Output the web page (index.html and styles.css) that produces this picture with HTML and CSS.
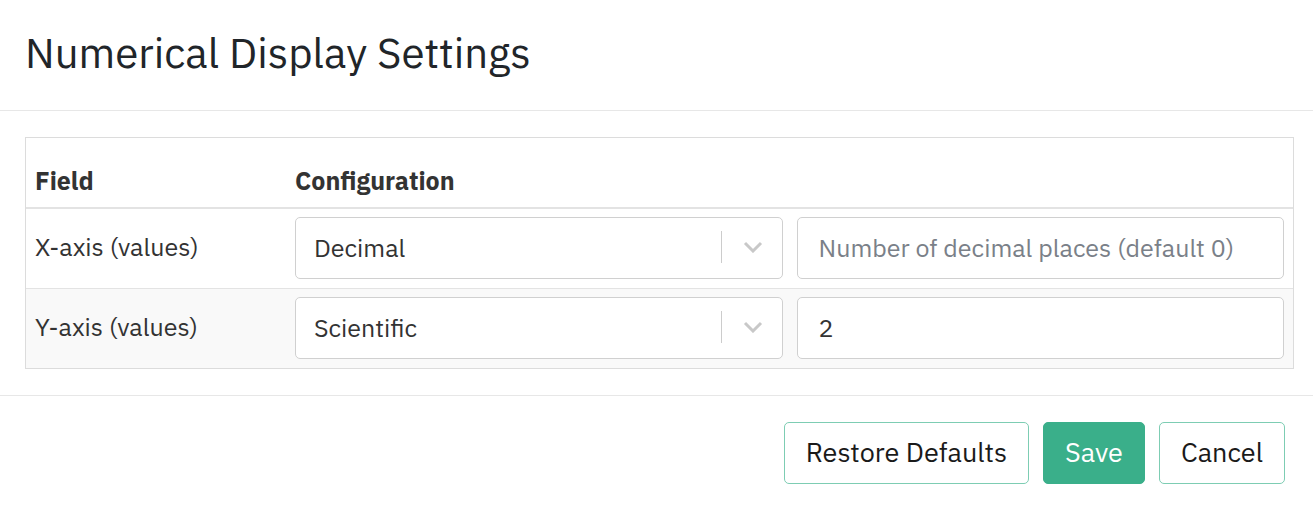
FILE: index.html
```html
<!DOCTYPE html>
<html>
<head>
    <title>Numerical Display Settings</title>
    <link rel="stylesheet" href="styles.css">
</head>
<body>
    <div class="modal">
        <div class="modal-header">
            <h1>Numerical Display Settings</h1>
        </div>
        <div class="modal-body">
            <div class="settings-table">
                <div class="row head">
                    <div class="cell field">Field</div>
                    <div class="cell config">Configuration</div>
                </div>
                <div class="row">
                    <div class="cell field">X-axis (values)</div>
                    <div class="cell config">
                        <div class="select">
                            <span class="select-value">Decimal</span>
                            <span class="select-sep"></span>
                            <svg class="chevron" width="20" height="12" viewBox="0 0 20 12"><path d="M2 2 L10 10 L18 2" fill="none" stroke="#c8c8c8" stroke-width="3"/></svg>
                        </div>
                        <input type="text" class="text-input" placeholder="Number of decimal places (default 0)">
                    </div>
                </div>
                <div class="row striped">
                    <div class="cell field">Y-axis (values)</div>
                    <div class="cell config">
                        <div class="select">
                            <span class="select-value">Scientific</span>
                            <span class="select-sep"></span>
                            <svg class="chevron" width="20" height="12" viewBox="0 0 20 12"><path d="M2 2 L10 10 L18 2" fill="none" stroke="#c8c8c8" stroke-width="3"/></svg>
                        </div>
                        <input type="text" class="text-input" value="2">
                    </div>
                </div>
            </div>
        </div>
        <div class="modal-footer">
            <button type="button" class="btn outline">Restore Defaults</button>
            <button type="button" class="btn primary">Save</button>
            <button type="button" class="btn outline">Cancel</button>
        </div>
    </div>
</body>
</html>
```

FILE: styles.css
```css
body {
    font-family: "IBM Plex Sans", Roboto, "Noto Sans", sans-serif;
    margin: 0;
    background-color: white;
    color: #333;
}
.modal {
    width: 1313px;
}
.modal-header {
    height: 111px;
    border-bottom: 1px solid #e7e7e7;
    padding: 0 25px;
    display: flex;
    align-items: center;
    box-sizing: border-box;
}
.modal-header h1 {
    margin: 0;
    font-size: 42px;
    font-weight: 400;
    color: #212529;
    position: relative;
    top: -3px;
}
.modal-body {
    padding: 26px 19px 26px 25px;
}
.settings-table {
    border: 1px solid #dcdcdc;
}
.row {
    display: flex;
    border-bottom: 1px solid #e3e3e3;
}
.row:last-child {
    border-bottom: none;
}
.row.head {
    border-bottom: 2px solid #e3e3e3;
    height: 69px;
    font-weight: 700;
    align-items: flex-end;
}
.row.head .cell {
    padding-bottom: 10px;
}
.row.striped {
    background-color: #f9f9f9;
}
.cell {
    font-size: 25px;
    padding: 8px 9px 9px;
    display: flex;
    align-items: center;
}
.cell.field {
    width: 242px;
    padding-bottom: 12px;
}
.cell.config {
    flex: 1;
    display: grid;
    grid-template-columns: 1fr 1fr;
    gap: 14px;
}
.select {
    height: 62px;
    border: 1px solid #d0d0d0;
    border-radius: 5px;
    background-color: white;
    display: flex;
    align-items: center;
    box-sizing: border-box;
    padding: 0 0 2px 18px;
    min-width: 0;
}
.select-value {
    flex: 1;
    color: #333;
}
.select-sep {
    width: 1px;
    height: 32px;
    background-color: #cccccc;
}
.chevron {
    margin: 0 19px 0 21px;
}
.text-input {
    width: 100%;
    height: 62px;
    border: 1px solid #d0d0d0;
    border-radius: 5px;
    box-sizing: border-box;
    padding: 0 21px 2px;
    font-family: inherit;
    font-size: 25px;
    color: #333;
    min-width: 0;
}
.text-input::placeholder {
    color: #7a8088;
}
.modal-footer {
    border-top: 1px solid #e7e7e7;
    padding: 26px 28px 21px;
    display: flex;
    justify-content: flex-end;
    gap: 14px;
}
.btn {
    height: 62px;
    padding: 0 21px 3px;
    font-family: inherit;
    font-size: 27px;
    border-radius: 5px;
    cursor: pointer;
}
.btn.outline {
    background-color: white;
    border: 1px solid #7dcdb3;
    color: #1a1a1a;
}
.btn.primary {
    background-color: #3aaf8a;
    border: 1px solid #3aaf8a;
    color: white;
}
```
